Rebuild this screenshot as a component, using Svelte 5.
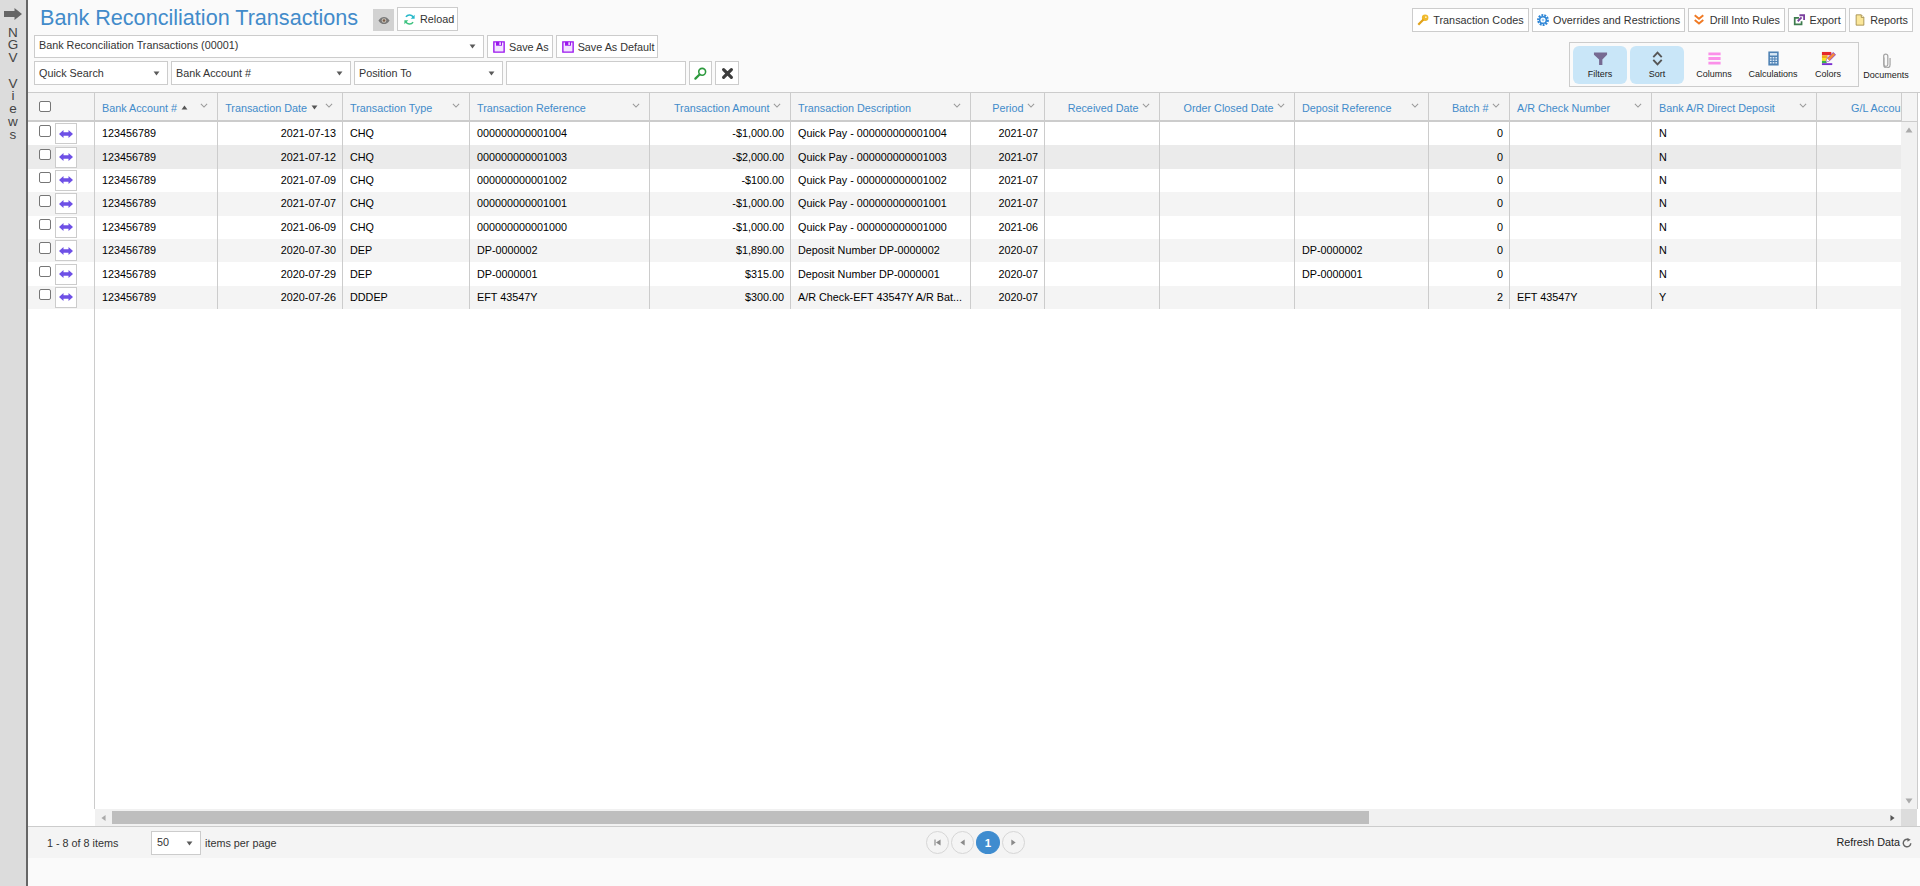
<script>
  const cols = [
    { w: 67, key: 'sel' },
    { w: 122.5, t: 'Bank Account #', key: 'acct', sort: 'up' },
    { w: 125.5, t: 'Transaction Date', key: 'date', right: true, sort: 'down' },
    { w: 127, t: 'Transaction Type', key: 'type' },
    { w: 180, t: 'Transaction Reference', key: 'ref' },
    { w: 141, t: 'Transaction Amount', key: 'amt', right: true },
    { w: 180, t: 'Transaction Description', key: 'desc' },
    { w: 74, t: 'Period', key: 'period', right: true },
    { w: 115, t: 'Received Date', key: 'rec', right: true },
    { w: 135, t: 'Order Closed Date', key: 'closed', right: true },
    { w: 134, t: 'Deposit Reference', key: 'dep' },
    { w: 81, t: 'Batch #', key: 'batch', right: true },
    { w: 142, t: 'A/R Check Number', key: 'chk' },
    { w: 165, t: 'Bank A/R Direct Deposit', key: 'dd' },
    { w: 114, t: 'G/L Account', key: 'gl', right: true }
  ];
  const mk = (date, type, ref, amt, desc, period, dep, batch, chk, dd) => ({
    acct: '123456789', date, type, ref, amt, desc, period, dep, batch, chk, dd
  });
  const rows = [
    mk('2021-07-13', 'CHQ', '000000000001004', '-$1,000.00', 'Quick Pay - 000000000001004', '2021-07', '', '0', '', 'N'),
    mk('2021-07-12', 'CHQ', '000000000001003', '-$2,000.00', 'Quick Pay - 000000000001003', '2021-07', '', '0', '', 'N'),
    mk('2021-07-09', 'CHQ', '000000000001002', '-$100.00', 'Quick Pay - 000000000001002', '2021-07', '', '0', '', 'N'),
    mk('2021-07-07', 'CHQ', '000000000001001', '-$1,000.00', 'Quick Pay - 000000000001001', '2021-07', '', '0', '', 'N'),
    mk('2021-06-09', 'CHQ', '000000000001000', '-$1,000.00', 'Quick Pay - 000000000001000', '2021-06', '', '0', '', 'N'),
    mk('2020-07-30', 'DEP', 'DP-0000002', '$1,890.00', 'Deposit Number DP-0000002', '2020-07', 'DP-0000002', '0', '', 'N'),
    mk('2020-07-29', 'DEP', 'DP-0000001', '$315.00', 'Deposit Number DP-0000001', '2020-07', 'DP-0000001', '0', '', 'N'),
    mk('2020-07-26', 'DDDEP', 'EFT 43547Y', '$300.00', 'A/R Check-EFT 43547Y A/R Bat...', '2020-07', '', '2', 'EFT 43547Y', 'Y')
  ];
  const letters = ['N', 'G', 'V', '\u00a0', 'V', 'i', 'e', 'w', 's'];
</script>

{#snippet caret()}
  <svg class="caret" viewBox="0 0 8 6" aria-hidden="true"><path d="M0.5 0.5h7L4 5.5z" /></svg>
{/snippet}

{#snippet save()}
  <svg class="ico" viewBox="0 0 14 14" aria-hidden="true">
    <path d="M1 1h12v12H1z" fill="#f3e3ff" stroke="#9a16ee" stroke-width="1.6" />
    <path d="M3.5 1h7v4.5h-7z" fill="#9a16ee" />
    <path d="M7.5 1.6h1.6v3h-1.6z" fill="#fff" />
  </svg>
{/snippet}

{#snippet chevron()}
  <svg class="chev" viewBox="0 0 9 6" aria-hidden="true"><path d="M1 1l3.5 3.5L8 1" /></svg>
{/snippet}

<div class="page">
  <aside class="side">
    <svg class="side-arrow" viewBox="0 0 18 12" aria-hidden="true"><path d="M0 3h10.500V0L18 6l-7.500 6V9H0z" fill="#666" /></svg>
    <div class="side-label">
      {#each letters as l}<span>{l}</span>{/each}
    </div>
  </aside>

  <main class="main">
    <header class="toolbar">
      <div class="tools-left">
        <div class="title-row">
          <h1>Bank Reconciliation Transactions</h1>
          <span class="eye">
            <svg viewBox="0 0 14 10" aria-hidden="true">
              <path d="M0.5 5C2.5 1.8 4.7 0.8 7 0.8s4.5 1 6.5 4.2C11.5 8.200 9.300 9.200 7 9.200S2.500 8.200 0.500 5z" fill="#777" />
              <circle cx="7" cy="5" r="2.700" fill="#c9c3bb" />
              <circle cx="7" cy="5" r="1.500" fill="#7a5c48" />
            </svg>
          </span>
          <button class="btn reload">
            <svg class="ico" viewBox="0 0 14 14" aria-hidden="true">
              <path d="M11.800 4.500A5.300 5.300 0 0 0 2.500 3.700" fill="none" stroke="#27b8c9" stroke-width="2" />
              <path d="M13.500 1v5h-5z" fill="#27b8c9" />
              <path d="M2.200 9.500a5.300 5.300 0 0 0 9.300.8" fill="none" stroke="#3cc27f" stroke-width="2" />
              <path d="M.5 13V8h5z" fill="#3cc27f" />
            </svg>
            Reload
          </button>
        </div>
        <div class="row view-row">
          <div class="select view-select"><span>Bank Reconciliation Transactions (00001)</span>{@render caret()}</div>
          <button class="btn">{@render save()}Save As</button>
          <button class="btn">{@render save()}Save As Default</button>
        </div>
        <div class="row search-row">
          <div class="select quick"><span>Quick Search</span>{@render caret()}</div>
          <div class="select field"><span>Bank Account #</span>{@render caret()}</div>
          <div class="select pos"><span>Position To</span>{@render caret()}</div>
          <input class="search-input" type="text" aria-label="Search value" />
          <button class="btn square" aria-label="Search">
            <svg class="ico" viewBox="0 0 14 14" aria-hidden="true">
              <circle cx="8.800" cy="5.200" r="3.700" fill="#fff" stroke="#2d9a3e" stroke-width="1.700" />
              <path d="M6 8L1.500 12.500" stroke="#2d9a3e" stroke-width="2.400" stroke-linecap="round" />
            </svg>
          </button>
          <button class="btn square" aria-label="Clear">
            <svg class="ico" viewBox="0 0 14 14" aria-hidden="true">
              <path d="M2.800 2.800l8.400 8.400M11.200 2.800l-8.400 8.400" stroke="#3d3d3d" stroke-width="3.400" stroke-linecap="round" />
            </svg>
          </button>
        </div>
      </div>

      <div class="tools-right">
        <div class="row actions">
          <button class="btn">
            <svg class="ico" viewBox="0 0 14 14" aria-hidden="true">
              <circle cx="9.500" cy="4.500" r="3.800" fill="#f0b92c" />
              <circle cx="10.300" cy="3.700" r="1" fill="#fff3c4" />
              <path d="M7.500 6.500L1.500 12.500" stroke="#e0a21a" stroke-width="2.600" />
            </svg>
            Transaction Codes
          </button>
          <button class="btn">
            <svg class="ico" viewBox="0 0 14 14" aria-hidden="true">
              <circle cx="7" cy="7" r="5.600" fill="none" stroke="#2f86d6" stroke-width="2.600" stroke-dasharray="2.200 1.200" />
              <circle cx="7" cy="7" r="3.900" fill="none" stroke="#2f86d6" stroke-width="1.800" />
              <circle cx="7" cy="7" r="1.600" fill="#9ecbf0" />
            </svg>
            Overrides and Restrictions
          </button>
          <button class="btn">
            <svg class="ico" viewBox="0 0 14 14" aria-hidden="true">
              <path d="M2 1.500l5 4 5-4M2 7l5 4 5-4" fill="none" stroke="#f07a24" stroke-width="2.300" />
            </svg>
            Drill Into Rules
          </button>
          <button class="btn">
            <svg class="ico" viewBox="0 0 14 14" aria-hidden="true">
              <path d="M1 3.500h6v2H3v5.500h6V8.500h2V13H1z" fill="#3f7d4f" />
              <path d="M5.500 8.500L10 4M7.500 1.500H13V7" fill="none" stroke="#7b3f9e" stroke-width="2.200" />
            </svg>
            Export
          </button>
          <button class="btn">
            <svg class="ico" viewBox="0 0 14 14" aria-hidden="true">
              <path d="M2.500 1h6l3 3v9h-9z" fill="#fbe79a" stroke="#a08a4a" stroke-width="1" />
              <path d="M8.500 1v3h3" fill="#fff6d0" stroke="#a08a4a" stroke-width="1" />
            </svg>
            Reports
          </button>
        </div>
        <div class="row panels">
          <div class="tool-box">
            <div class="tool active">
              <svg viewBox="0 0 16 16" aria-hidden="true"><path d="M1 1.500h14v2.500L10 9v6H6.500V9L1 4z" fill="#766a92" /></svg>
              <span>Filters</span>
            </div>
            <div class="tool active">
              <svg viewBox="0 0 16 16" aria-hidden="true"><path d="M3.500 6.500L8 1.800l4.500 4.700M3.500 9.500L8 14.200l4.500-4.700" fill="none" stroke="#555" stroke-width="2" /></svg>
              <span>Sort</span>
            </div>
            <div class="tool">
              <svg viewBox="0 0 16 16" aria-hidden="true"><path d="M1.500 1.500h13v3h-13zM1.500 6.500h13v3h-13zM1.500 11.500h13v3h-13z" fill="#fb8fe9" /></svg>
              <span>Columns</span>
            </div>
            <div class="tool calc">
              <svg viewBox="0 0 16 16" aria-hidden="true">
                <path d="M2.500 0.500h11v15h-11z" fill="#4f82b4" />
                <path d="M4.200 2.200h7.600v2.600H4.200z" fill="#d9e8f5" />
                <path d="M4.200 6.300h1.800v1.600H4.200zM7.100 6.300h1.800v1.600H7.100zM10 6.300h1.800v1.600H10zM4.200 9h1.800v1.600H4.200zM7.100 9h1.800v1.600H7.100zM10 9h1.800v1.600H10zM4.200 11.700h1.800v1.600H4.200zM7.100 11.700h1.800v1.600H7.100zM10 11.700h1.800v1.600H10z" fill="#d9e8f5" />
              </svg>
              <span>Calculations</span>
            </div>
            <div class="tool colors">
              <svg viewBox="0 0 16 16" aria-hidden="true">
                <path d="M1 1h10v3.500H1z" fill="#e5282b" />
                <path d="M1 4.500h6v3H1z" fill="#f2a71b" />
                <path d="M1 7.500h5v3H1z" fill="#f5e51c" />
                <path d="M1 10.500h5v2.500H1z" fill="#38b34a" />
                <path d="M1 13h11v2H1z" fill="#7a2fd0" />
                <path d="M5.500 11.500l1-3.500 6.500-6.500 2.500 2.500L9 10.500z" fill="#f58a3c" stroke="#7a2fd0" stroke-width="0.800" />
                <path d="M5.500 11.500l1-3.500 2.500 2.500z" fill="#fff" />
              </svg>
              <span>Colors</span>
            </div>
          </div>
          <div class="tool docs">
            <svg viewBox="0 0 16 16" aria-hidden="true">
              <path d="M6 4.500v7.500a2 2 0 0 0 4 0V3.200a2.200 2.200 0 0 0-4.400 0v9a3.400 3.400 0 0 0 6.800 0V5" transform="translate(-0.600 0.200)" fill="none" stroke="#a3a3a3" stroke-width="1.300" />
            </svg>
            <span>Documents</span>
          </div>
        </div>
      </div>
    </header>

    <section class="grid">
      <div class="grid-body">
        <div class="table-clip">
          <table>
            <colgroup>
              {#each cols as c}<col style="width:{c.w}px" />{/each}
            </colgroup>
            <thead>
              <tr>
                {#each cols as c}
                  {#if c.key === 'sel'}
                    <th class="sel-head"><input type="checkbox" aria-label="Select all" /></th>
                  {:else}
                    <th class:right={c.right}>
                      <div class="head-in">
                        <span class="head-text">{c.t}</span>
                        {#if c.sort === 'up'}
                          <svg class="sort" viewBox="0 0 8 6" aria-hidden="true"><path d="M4 0.500L7.500 5.500h-7z" /></svg>
                        {:else if c.sort === 'down'}
                          <svg class="sort" viewBox="0 0 8 6" aria-hidden="true"><path d="M0.500 0.500h7L4 5.500z" /></svg>
                        {/if}
                        {@render chevron()}
                      </div>
                    </th>
                  {/if}
                {/each}
              </tr>
            </thead>
            <tbody>
              {#each rows as r, i}
                <tr class:hover={i === 1} class:alt={i % 2 === 1 && i !== 1}>
                  {#each cols as c}
                    {#if c.key === 'sel'}
                      <td class="sel-cell">
                        <div class="sel-in">
                          <input type="checkbox" aria-label="Select row" />
                          <span class="drill">
                            <svg viewBox="0 0 14 8" aria-hidden="true"><path d="M0 4L4.500 0V2.200H9.500V0L14 4 9.500 8V5.800H4.500V8z" fill="#6e50e6" /></svg>
                          </span>
                        </div>
                      </td>
                    {:else}
                      <td class:right={c.right}>{r[c.key] ?? ''}</td>
                    {/if}
                  {/each}
                </tr>
              {/each}
            </tbody>
          </table>
          <div class="frozen-line"></div>
        </div>
        <div class="vscroll">
          <div class="vscroll-head"></div>
          <div class="vscroll-track">
            <svg viewBox="0 0 8 6" aria-hidden="true"><path d="M4 0.500L7.500 5.500h-7z" fill="#aaa" /></svg>
            <svg viewBox="0 0 8 6" aria-hidden="true"><path d="M0.500 0.500h7L4 5.500z" fill="#aaa" /></svg>
          </div>
        </div>
      </div>
      <div class="hscroll">
        <div class="hscroll-gap"></div>
        <div class="hscroll-track">
          <svg viewBox="0 0 6 8" aria-hidden="true"><path d="M5.500 0.500v7L.5 4z" fill="#aaa" /></svg>
          <div class="thumb"></div>
          <svg viewBox="0 0 6 8" aria-hidden="true"><path d="M0.500 0.500v7L5.500 4z" fill="#555" /></svg>
        </div>
        <div class="hscroll-corner"></div>
      </div>
      <footer class="pager">
        <span class="count">1 - 8 of 8 items</span>
        <div class="select size"><span>50</span>{@render caret()}</div>
        <span class="per">items per page</span>
        <nav class="pages">
          <span class="pg"><svg viewBox="0 0 8 8" aria-hidden="true"><path d="M0.500 0.500h1.300v7H.5zM7.500 0.500v7L2.200 4z" fill="#8a8a8a" /></svg></span>
          <span class="pg"><svg viewBox="0 0 8 8" aria-hidden="true"><path d="M6.500 0.500v7L1.500 4z" fill="#8a8a8a" /></svg></span>
          <span class="pg current">1</span>
          <span class="pg"><svg viewBox="0 0 8 8" aria-hidden="true"><path d="M1.500 0.500v7L6.500 4z" fill="#8a8a8a" /></svg></span>
        </nav>
        <span class="refresh">Refresh Data
          <svg viewBox="0 0 12 12" aria-hidden="true">
            <path d="M8.300 2.200A4.500 4.500 0 1 0 10.500 6.200" fill="none" stroke="#666" stroke-width="1.700" />
            <path d="M6.500 0v4.500L10.500 2z" fill="#666" />
          </svg>
        </span>
      </footer>
    </section>
  </main>
</div>

<style>
  :global(body) {
    margin: 0;
    background: #fafafa;
    font-family: "Liberation Sans", Arial, sans-serif;
  }
  .page {
    display: flex;
    height: 886px;
    overflow: hidden;
    font-size: 10.8px;
    color: #333;
    background: #fafafa;
  }
  .side {
    width: 26px;
    flex: none;
    box-sizing: content-box;
    background: #dcdcdc;
    border-right: 2px solid #666;
    display: flex;
    flex-direction: column;
    align-items: center;
    padding-top: 8px;
  }
  .side-arrow {
    width: 18px;
    height: 12px;
  }
  .side-label {
    display: flex;
    flex-direction: column;
    align-items: center;
    margin-top: 6.500px;
    font-size: 13.5px;
    line-height: 12.75px;
    color: #444;
  }
  .main {
    flex: 1;
    min-width: 0;
    display: flex;
    flex-direction: column;
  }
  .toolbar {
    height: 92px;
    flex: none;
    display: flex;
    justify-content: space-between;
    padding: 0 7px 0 6px;
    box-sizing: border-box;
  }
  .tools-left {
    display: flex;
    flex-direction: column;
  }
  .title-row {
    display: flex;
    align-items: flex-start;
    height: 35px;
  }
  h1 {
    margin: 3px 0 0 6px;
    font-size: 21.600px;
    line-height: 30px;
    font-weight: 400;
    color: #428bca;
    width: 333px;
    white-space: nowrap;
  }
  .eye {
    width: 21px;
    height: 22px;
    margin-top: 9px;
    background: #d2d2d2;
    display: flex;
    align-items: center;
    justify-content: center;
  }
  .eye svg {
    width: 12px;
    height: 9px;
  }
  .row {
    display: flex;
    gap: 3px;
  }
  .view-row {
    height: 26px;
    align-items: flex-start;
  }
  .btn {
    display: inline-flex;
    align-items: center;
    gap: 4px;
    height: 23px;
    padding: 0 3px 0 5px;
    border: 1px solid #ccc;
    background: #fff;
    color: #333;
    font: inherit;
    white-space: nowrap;
    box-sizing: border-box;
  }
  .ico {
    width: 12px;
    height: 12px;
    flex: none;
  }
  .reload {
    margin: 7px 0 0 3px;
    height: 24px;
    padding: 0 4px 0 6px;
    gap: 5px;
    width: 61px;
  }
  .reload .ico {
    width: 11px;
    height: 11px;
  }
  .select {
    display: flex;
    align-items: center;
    justify-content: space-between;
    height: 23px;
    padding: 0 4px 1px 4px;
    background: #fff;
    border: 1px solid #ccc;
    box-sizing: border-box;
    color: #333;
    white-space: nowrap;
  }
  .caret {
    width: 7px;
    height: 5px;
    margin: 2px 3px 0 0;
    flex: none;
  }
  .caret path {
    fill: #5a5a5a;
  }
  .view-select {
    width: 450px;
    padding-bottom: 3px;
  }
  .search-row {
    height: 24px;
  }
  .search-row .select {
    height: 24px;
  }
  .quick { width: 134px; }
  .field { width: 180px; }
  .pos { width: 149px; }
  .search-input {
    width: 180px;
    height: 24px;
    box-sizing: border-box;
    border: 1px solid #ccc;
    background: #fff;
    padding: 0;
    outline: none;
  }
  .square {
    width: 23px;
    height: 24px;
    padding: 0;
    justify-content: center;
  }
  .search-row .square + .square {
    width: 24px;
  }
  .square .ico {
    width: 13px;
    height: 13px;
  }
  .tools-right {
    display: flex;
    flex-direction: column;
    align-items: flex-end;
    padding-top: 8px;
  }
  .actions {
    height: 24px;
  }
  .actions .btn {
    height: 24px;
    padding: 0 4px;
    gap: 4.500px;
  }
  .panels {
    margin-top: 10px;
    margin-right: 1px;
    gap: 1px;
    align-items: flex-start;
  }
  .tool-box {
    display: flex;
    gap: 3px;
    padding: 3px;
    height: 45px;
    width: 290px;
    box-sizing: border-box;
    border: 1px solid #ccc;
  }
  .tool {
    display: flex;
    flex-direction: column;
    align-items: center;
    height: 38px;
    width: 54px;
    flex: none;
    padding-top: 5px;
    box-sizing: border-box;
    border-radius: 6px;
    color: #222;
    font-size: 9px;
    white-space: nowrap;
  }
  .tool svg {
    width: 15px;
    height: 15px;
    flex: none;
  }
  .tool span {
    margin-top: 3px;
  }
  .active {
    background: #c9e6f8;
  }
  .calc { width: 58px; }
  .colors { width: 46px; }
  .docs {
    width: 52px;
    padding-top: 11px;
    height: 45px;
  }
  .docs span {
    margin-top: 2px;
  }
  .grid {
    flex: none;
    display: flex;
    flex-direction: column;
    width: 1892px;
    background: #fff;
    border-top: 1px solid #ccc;
    box-sizing: border-box;
  }
  .grid-body {
    display: flex;
    height: 716px;
    width: 1890px;
    box-sizing: border-box;
    border-right: 1px solid #ccc;
  }
  .table-clip {
    position: relative;
    flex: 1;
    min-width: 0;
    overflow: hidden;
  }
  table {
    table-layout: fixed;
    width: 1903px;
    border-collapse: separate;
    border-spacing: 0;
    color: #000;
  }
  th, td {
    box-sizing: border-box;
    padding: 0 6px 0 7px;
    border-right: 1px solid #ccc;
    text-align: left;
    font-weight: 400;
    white-space: nowrap;
    overflow: hidden;
  }
  th {
    height: 29px;
    background: #f4f4f4;
    border-bottom: 2px solid #ccc;
    padding-right: 9px;
    padding-top: 2px;
  }
  td {
    height: 23.400px;
    padding-bottom: 1px;
  }
  td.right {
    text-align: right;
  }
  th.sel-head {
    padding: 0;
    text-align: left;
  }
  input[type="checkbox"] {
    appearance: none;
    width: 11.500px;
    height: 11.500px;
    box-sizing: border-box;
    border: 1px solid #767676;
    border-radius: 2px;
    background: #fff;
    display: block;
  }
  .sel-head input[type="checkbox"] {
    margin: 0 0 0 11px;
  }
  .head-in {
    display: flex;
    align-items: center;
    color: #428bca;
    gap: 3.500px;
  }
  th.right .head-in {
    justify-content: flex-end;
  }
  .head-in .chev {
    margin-left: auto;
  }
  th.right .head-text {
    margin-left: auto;
  }
  th.right .chev {
    margin-left: 0;
  }
  .head-in .sort {
    width: 7px;
    height: 5px;
    flex: none;
    margin-right: 4px;
  }
  .sort path {
    fill: #555;
  }
  .chev {
    width: 8px;
    height: 5.500px;
    flex: none;
    margin-bottom: 3px;
  }
  .chev path {
    fill: none;
    stroke: #999;
    stroke-width: 1.200;
  }
  td.sel-cell {
    padding: 0;
    overflow: visible;
  }
  .sel-in {
    display: flex;
    align-items: flex-start;
    height: 23px;
    padding-left: 11px;
    gap: 4.500px;
  }
  .sel-in input[type="checkbox"] {
    margin: 3px 0 0;
  }
  .drill {
    width: 22px;
    height: 21px;
    margin-top: 1px;
    box-sizing: border-box;
    background: #fff;
    border: 1px solid #ccc;
    display: flex;
    align-items: center;
    justify-content: center;
  }
  .drill svg {
    width: 14px;
    height: 8px;
  }
  tr.hover td {
    background: #ebebeb;
  }
  tr.alt td {
    background: #f4f4f4;
  }
  .frozen-line {
    position: absolute;
    left: 66px;
    top: 0;
    bottom: 0;
    width: 1px;
    background: #ccc;
  }
  .vscroll {
    width: 16px;
    flex: none;
    display: flex;
    flex-direction: column;
    background: #f1f1f1;
  }
  .vscroll-head {
    height: 29px;
    background: #f4f4f4;
    border-bottom: 1px solid #ccc;
    border-left: 1px solid #ccc;
    box-sizing: border-box;
  }
  .vscroll-track {
    flex: 1;
    display: flex;
    flex-direction: column;
    justify-content: space-between;
    align-items: center;
    padding: 5px 0;
  }
  .vscroll-track svg {
    width: 8px;
    height: 6px;
  }
  .hscroll {
    display: flex;
    height: 17px;
    box-sizing: content-box;
    border-bottom: 1px solid #ccc;
  }
  .hscroll-gap {
    width: 67px;
    flex: none;
    background: #fff;
  }
  .hscroll-track {
    width: 1806px;
    flex: none;
    box-sizing: border-box;
    display: flex;
    align-items: center;
    background: #f1f1f1;
    padding-right: 6px;
    padding-left: 6px;
  }
  .hscroll-track svg {
    width: 5px;
    height: 8px;
    flex: none;
  }
  .thumb {
    width: 1257px;
    height: 13px;
    background: #bebebe;
    margin-left: 6px;
    margin-right: auto;
  }
  .hscroll-corner {
    width: 16px;
    flex: none;
    background: #dcdcdc;
  }
  .pager {
    position: relative;
    display: flex;
    align-items: center;
    height: 31px;
    padding-left: 19px;
    background: #f4f4f4;
    color: #333;
    font-size: 10.800px;
  }
  .count {
    width: 104px;
  }
  .size {
    width: 50px;
    height: 24px;
    padding-left: 5px;
  }
  .per {
    margin-left: 4px;
  }
  .pages {
    position: absolute;
    left: 898px;
    top: 4px;
    display: flex;
    gap: 2px;
  }
  .pg {
    width: 23px;
    height: 23px;
    border: 1px solid #d6d6d6;
    border-radius: 50%;
    box-sizing: border-box;
    display: flex;
    align-items: center;
    justify-content: center;
  }
  .pg svg {
    width: 7px;
    height: 7px;
  }
  .current {
    background: #3f8ccf;
    border-color: #3f8ccf;
    color: #fff;
    width: 24px;
    font-weight: 700;
    font-size: 11.500px;
  }
  .refresh {
    margin-left: auto;
    margin-right: 8px;
    display: inline-flex;
    align-items: center;
    gap: 2px;
    color: #222;
    margin-bottom: 2px;
  }
  .refresh svg {
    width: 10px;
    height: 10px;
    margin-top: 2px;
  }
</style>
